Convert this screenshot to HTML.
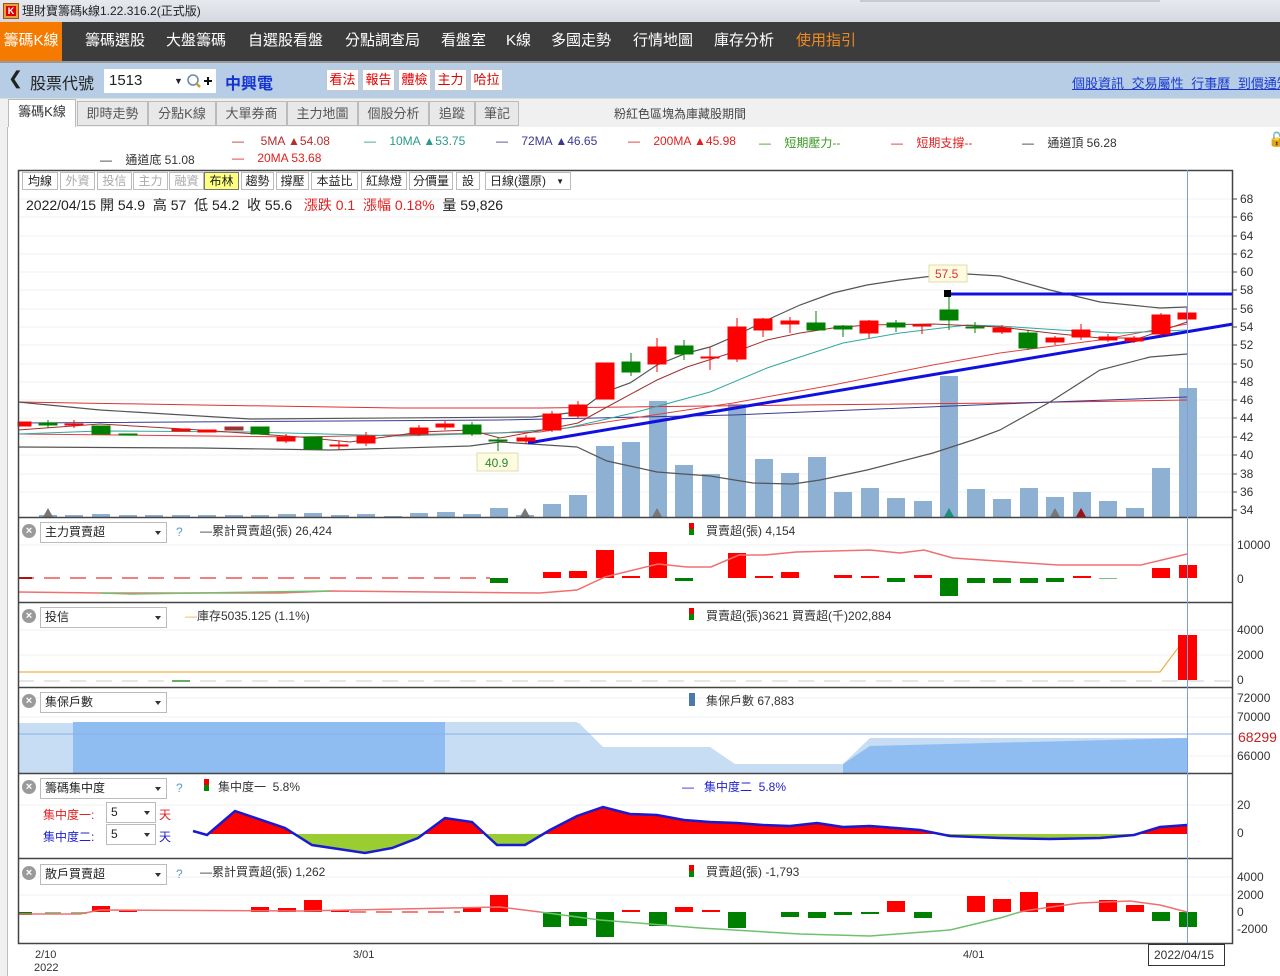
<!DOCTYPE html>
<html><head><meta charset="utf-8">
<style>
*{margin:0;padding:0;box-sizing:border-box}
body{width:1280px;height:976px;overflow:hidden;background:#fff;font-family:"Liberation Sans","Noto Sans CJK TC",sans-serif;position:relative}
.a{position:absolute;white-space:nowrap}
#title{left:0;top:0;width:1280px;height:22px;background:linear-gradient(#e6e9ee,#d6dae0);font-size:12px;color:#222;line-height:22px;padding-left:22px}
#menu{left:0;top:22px;width:1280px;height:39px;background:#3c3c3c}
.mi{position:absolute;top:0;height:39px;line-height:38px;color:#fff;font-size:15px}
#bar{left:0;top:61px;width:1280px;height:37px;background:#b7cde6;border-top:2px solid #999}
#tabs{left:0;top:98px;width:1280px;height:29px;background:#f0f0f0;border-top:1px solid #ddd}
.tab{position:absolute;top:3px;height:25px;line-height:24px;font-size:13px;color:#555;background:#e8e8e8;border:1px solid #bbb;text-align:center}
.btn{position:absolute;top:69px;height:22px;line-height:20px;font-size:13px;color:#e00000;background:#fff;border:1px solid #c8c8c8;text-align:center}
.tb{position:absolute;top:172px;height:18px;line-height:17px;font-size:12px;color:#222;background:#fff;border:1px solid #bbb;text-align:center}
.dd{position:absolute;height:21px;background:#fff;border:1px solid #bbb;font-size:12px;line-height:19px;padding-left:4px;color:#222}
.dd:after{content:"";position:absolute;right:5px;top:8px;border:3px solid transparent;border-top:4px solid #333}
.x{position:absolute;width:14px;height:14px;border-radius:7px;background:#9a9a9a;color:#fff;font-size:11px;line-height:14px;text-align:center;font-weight:bold}
.lg{font-size:12px;color:#333}
.ax{font-size:12px;color:#333}
</style></head><body>
<div class="a" id="title">理財寶籌碼k線1.22.316.2(正式版)</div>
<div class="a" style="left:3px;top:3px;width:16px;height:16px;background:#e8a040;border:1px solid #a05010"><div style="margin:2px;width:10px;height:10px;background:#d00;color:#fff;font-size:9px;line-height:10px;text-align:center;font-weight:bold">K</div></div>
<div class="a" style="left:860px;top:0;width:300px;height:2px;background:#c8ccd2"></div>
<div class="a" id="menu">
<div class="mi" style="left:0;width:62px;background:#f47b00;text-align:center">籌碼K線</div>
<div class="mi" style="left:85px">籌碼選股</div>
<div class="mi" style="left:166px">大盤籌碼</div>
<div class="mi" style="left:248px">自選股看盤</div>
<div class="mi" style="left:345px">分點調查局</div>
<div class="mi" style="left:441px">看盤室</div>
<div class="mi" style="left:506px">K線</div>
<div class="mi" style="left:551px">多國走勢</div>
<div class="mi" style="left:633px">行情地圖</div>
<div class="mi" style="left:714px">庫存分析</div>
<div class="mi" style="left:796px;color:#f08a20">使用指引</div>
</div>
<div class="a" id="bar"></div>
<div class="a" style="left:8px;top:68px;font-size:18px;color:#222">❮</div>
<div class="a" style="left:30px;top:70px;font-size:16px;color:#222">股票代號</div>
<div class="a" style="left:104px;top:69px;width:112px;height:24px;background:#fff;font-size:15px;line-height:24px;padding-left:5px;color:#222">1513<span style="position:absolute;left:70px;font-size:9px">▼</span></div>
<svg class="a" style="left:186px;top:73px" width="30" height="16"><circle cx="7" cy="7" r="5" fill="none" stroke="#6a8ab0" stroke-width="1.6"/><line x1="10.5" y1="10.5" x2="14" y2="14" stroke="#c8a020" stroke-width="2.5"/><path d="M18 8h8M22 4v8" stroke="#111" stroke-width="2"/></svg>
<div class="a" style="left:225px;top:70px;font-size:16px;color:#1533d0;font-weight:bold">中興電</div>
<div class="btn" style="left:326px;width:33px">看法</div>
<div class="btn" style="left:362px;width:33px">報告</div>
<div class="btn" style="left:398px;width:33px">體檢</div>
<div class="btn" style="left:434px;width:33px">主力</div>
<div class="btn" style="left:470px;width:33px">哈拉</div>
<div class="a" style="left:1072px;top:73px;font-size:13px;color:#1a3ad0;text-decoration:underline;word-spacing:4px">個股資訊 交易屬性 行事曆 到價通知</div>
<div class="a" id="tabs"></div>
<div class="tab" style="left:8px;top:99px;width:68px;height:28px;background:#fff;border-bottom:none;color:#333">籌碼K線</div>
<div class="tab" style="left:77px;top:101px;width:71px">即時走勢</div>
<div class="tab" style="left:148px;top:101px;width:68px">分點K線</div>
<div class="tab" style="left:216px;top:101px;width:71px">大單券商</div>
<div class="tab" style="left:287px;top:101px;width:71px">主力地圖</div>
<div class="tab" style="left:358px;top:101px;width:71px">個股分析</div>
<div class="tab" style="left:429px;top:101px;width:46px">追蹤</div>
<div class="tab" style="left:475px;top:101px;width:44px">筆記</div>
<div class="a" style="left:614px;top:105px;font-size:12px;color:#444">粉紅色區塊為庫藏股期間</div>
<div class="a" style="left:0;top:127px;width:1280px;height:849px;background:#fff"></div>
<div class="a" style="left:7px;top:127px;width:1px;height:849px;background:#bbb"></div>
<div class="a" style="left:0;top:127px;width:7px;height:849px;background:#f0f0f0"></div>
<div class="a lg" style="left:232px;top:134px;color:#b03030">—&nbsp;&nbsp;&nbsp;&nbsp;&nbsp;5MA ▲54.08</div>
<div class="a lg" style="left:364px;top:134px;color:#2a9a8a">—&nbsp;&nbsp;&nbsp;&nbsp;10MA ▲53.75</div>
<div class="a lg" style="left:496px;top:134px;color:#3a3a90">—&nbsp;&nbsp;&nbsp;&nbsp;72MA ▲46.65</div>
<div class="a lg" style="left:628px;top:134px;color:#e02020">—&nbsp;&nbsp;&nbsp;&nbsp;200MA ▲45.98</div>
<div class="a lg" style="left:759px;top:134px;color:#3a9a20">—&nbsp;&nbsp;&nbsp;&nbsp;短期壓力--</div>
<div class="a lg" style="left:891px;top:134px;color:#e02020">—&nbsp;&nbsp;&nbsp;&nbsp;短期支撐--</div>
<div class="a lg" style="left:1022px;top:134px;color:#333">—&nbsp;&nbsp;&nbsp;&nbsp;通道頂 56.28</div>
<div class="a lg" style="left:100px;top:151px;color:#333">—&nbsp;&nbsp;&nbsp;&nbsp;通道底 51.08</div>
<div class="a lg" style="left:232px;top:151px;color:#e02020">—&nbsp;&nbsp;&nbsp;&nbsp;20MA 53.68</div>
<div class="a" style="left:1268px;top:131px;font-size:14px;color:#222">🔓</div>

<svg class="a" style="left:0;top:0" width="1280" height="976">
<g stroke="#f0f0f0" stroke-width="1">
<path d="M18 199H1233M18 217H1233M18 236H1233M18 254H1233M18 272H1233M18 290H1233M18 309H1233M18 327H1233M18 345H1233M18 364H1233M18 382H1233M18 400H1233M18 418H1233M18 437H1233M18 455H1233M18 474H1233M18 492H1233"/>
<path d="M18 545H1233M18 630H1233M18 655H1233M18 698H1233M18 717H1233M18 756H1233M18 805H1233M18 877H1233M18 895H1233"/>
</g>
<g fill="#8eb0d3">
<rect x="39" y="515" width="18" height="2"/><rect x="65" y="515" width="18" height="2"/><rect x="92" y="514" width="18" height="3"/><rect x="119" y="515" width="18" height="2"/><rect x="145" y="515" width="18" height="2"/><rect x="172" y="515" width="18" height="2"/><rect x="198" y="515" width="18" height="2"/><rect x="225" y="515" width="18" height="2"/><rect x="251" y="515" width="18" height="2"/><rect x="278" y="514" width="18" height="3"/><rect x="304" y="513" width="18" height="4"/><rect x="331" y="515" width="18" height="2"/><rect x="357" y="514" width="18" height="3"/><rect x="384" y="516" width="18" height="1"/><rect x="410" y="513" width="18" height="4"/><rect x="437" y="512" width="18" height="5"/><rect x="463" y="514" width="18" height="3"/><rect x="490" y="508" width="18" height="9"/><rect x="516" y="515" width="18" height="2"/><rect x="543" y="504" width="18" height="13"/><rect x="569" y="495" width="18" height="22"/><rect x="596" y="446" width="18" height="71"/><rect x="622" y="442" width="18" height="75"/><rect x="649" y="401" width="18" height="116"/><rect x="675" y="465" width="18" height="52"/><rect x="702" y="474" width="18" height="43"/><rect x="728" y="404" width="18" height="113"/><rect x="755" y="459" width="18" height="58"/><rect x="781" y="473" width="18" height="44"/><rect x="808" y="457" width="18" height="60"/><rect x="834" y="492" width="18" height="25"/><rect x="861" y="488" width="18" height="29"/><rect x="887" y="498" width="18" height="19"/><rect x="914" y="501" width="18" height="16"/><rect x="940" y="376" width="18" height="141"/><rect x="967" y="489" width="18" height="28"/><rect x="993" y="499" width="18" height="18"/><rect x="1020" y="488" width="18" height="29"/><rect x="1046" y="497" width="18" height="20"/><rect x="1073" y="492" width="18" height="25"/><rect x="1099" y="501" width="18" height="16"/><rect x="1126" y="508" width="18" height="9"/><rect x="1152" y="468" width="18" height="49"/><rect x="1179" y="388" width="18" height="129"/>
</g>
<g><path d="M43 517l5-9 5 9z" fill="#777"/><path d="M520 517l5-9 5 9z" fill="#777"/><path d="M652 517l5-9 5 9z" fill="#777"/><path d="M944 517l5-9 5 9z" fill="#1a9080"/><path d="M1050 517l5-9 5 9z" fill="#777"/><path d="M1076 517l5-9 5 9z" fill="#a01010"/></g>
<g fill="none">
<polyline stroke="#e03030" stroke-width="1" points="18,402 200,405 400,408 540,408 800,405 1000,403 1187,400"/>
<polyline stroke="#3a3a90" stroke-width="1" points="18,423 500,420 733,415 1000,404 1187,397"/>
<polyline stroke="#555" stroke-width="1.2" points="18,402 100,410 250,419 533,417 578,412 605,392 630,383 657,365 687,353 710,347 733,337 767,320 800,305 833,293 867,285 900,280 933,276 967,274 1000,276 1050,290 1100,302 1160,308 1187,307"/>
<polyline stroke="#555" stroke-width="1.2" points="18,447 200,448 330,450 470,446 500,442 577,447 607,461 657,472 710,476 753,483 793,484 820,480 867,470 933,453 973,440 1000,430 1050,402 1100,370 1150,357 1187,354"/>
<polyline stroke="#e04040" stroke-width="1" points="18,434 300,437 540,432 633,418 733,403 833,385 933,365 1000,353 1100,340 1187,324"/>
<polyline stroke="#30a8a0" stroke-width="1" points="18,434 100,431 250,432 400,436 500,433 567,428 633,413 710,392 767,368 800,357 843,343 900,333 967,325 1000,326 1060,330 1120,333 1187,330"/>
<polyline stroke="#a03030" stroke-width="1" points="18,430 100,424 200,430 300,437 350,442 420,432 470,430 500,438 543,430 578,423 607,407 657,380 687,367 740,350 767,340 800,333 833,328 867,325 933,324 1000,327 1050,333 1100,338 1140,338 1187,322"/>
<line x1="528" y1="443" x2="1233" y2="324" stroke="#1010e0" stroke-width="3"/>
<line x1="948" y1="294" x2="1233" y2="294" stroke="#1010e0" stroke-width="3"/>
</g>
<g stroke-width="1">
<g stroke="#ff0000" fill="#ff0000">
<rect x="18" y="422" width="13" height="4"/>
<line x1="74" y1="420" x2="74" y2="428"/><rect x="65" y="424" width="18" height="1"/>
<rect x="172" y="429" width="18" height="2"/><rect x="198" y="430" width="18" height="2"/>
<rect x="277" y="437" width="18" height="4"/><line x1="286" y1="434" x2="286" y2="443"/>
<line x1="339" y1="441" x2="339" y2="450"/><rect x="330" y="445" width="18" height="1"/>
<rect x="357" y="436" width="18" height="7"/><line x1="366" y1="432" x2="366" y2="446"/>
<rect x="410" y="428" width="18" height="6"/><line x1="419" y1="425" x2="419" y2="436"/>
<rect x="436" y="424" width="18" height="3"/><line x1="445" y1="421" x2="445" y2="430"/>
<rect x="517" y="438" width="18" height="3"/><line x1="526" y1="435" x2="526" y2="444"/>
<rect x="543" y="414" width="18" height="16"/><line x1="552" y1="411" x2="552" y2="432"/>
<rect x="569" y="405" width="18" height="11"/><line x1="578" y1="401" x2="578" y2="418"/>
<rect x="596" y="363" width="18" height="36"/>
<rect x="648" y="347" width="18" height="17"/><line x1="657" y1="338" x2="657" y2="372"/>
<line x1="710" y1="347" x2="710" y2="370"/><rect x="701" y="357" width="18" height="1"/>
<rect x="728" y="327" width="18" height="32"/><line x1="737" y1="318" x2="737" y2="362"/>
<rect x="754" y="319" width="18" height="11"/><line x1="763" y1="318" x2="763" y2="337"/>
<rect x="781" y="321" width="18" height="3"/><line x1="790" y1="317" x2="790" y2="333"/>
<rect x="860" y="321" width="18" height="12"/><line x1="869" y1="320" x2="869" y2="338"/>
<rect x="913" y="325" width="18" height="1"/><line x1="922" y1="324" x2="922" y2="334"/>
<rect x="993" y="328" width="18" height="4"/><line x1="1002" y1="325" x2="1002" y2="334"/>
<rect x="1046" y="338" width="18" height="4"/><line x1="1055" y1="336" x2="1055" y2="345"/>
<rect x="1072" y="330" width="18" height="7"/><line x1="1081" y1="324" x2="1081" y2="340"/>
<rect x="1099" y="337" width="18" height="3"/><line x1="1108" y1="334" x2="1108" y2="342"/>
<rect x="1125" y="338" width="18" height="3"/><line x1="1134" y1="336" x2="1134" y2="343"/>
<rect x="1152" y="315" width="18" height="19"/><line x1="1161" y1="313" x2="1161" y2="336"/>
<rect x="1178" y="313" width="18" height="6"/><line x1="1187" y1="308" x2="1187" y2="323"/>
</g>
<g stroke="#a03030" fill="#a03030"><rect x="225" y="427" width="18" height="3"/></g>
<g stroke="#008000" fill="#008000">
<rect x="39" y="423" width="18" height="2"/><line x1="48" y1="420" x2="48" y2="428"/>
<rect x="92" y="426" width="18" height="8"/>
<rect x="119" y="434" width="18" height="1"/>
<rect x="251" y="427" width="18" height="7"/>
<rect x="304" y="437" width="18" height="12"/>
<rect x="463" y="425" width="18" height="9"/><line x1="472" y1="422" x2="472" y2="436"/>
<line x1="498" y1="437" x2="498" y2="451"/><rect x="489" y="440" width="18" height="1"/>
<rect x="622" y="362" width="18" height="10"/><line x1="631" y1="353" x2="631" y2="376"/>
<rect x="675" y="346" width="18" height="8"/><line x1="684" y1="340" x2="684" y2="360"/>
<rect x="807" y="323" width="18" height="7"/><line x1="816" y1="311" x2="816" y2="330"/>
<rect x="834" y="326" width="18" height="3"/><line x1="843" y1="325" x2="843" y2="337"/>
<rect x="887" y="323" width="18" height="4"/><line x1="896" y1="320" x2="896" y2="332"/>
<rect x="940" y="310" width="18" height="10"/><line x1="949" y1="293" x2="949" y2="330"/>
<line x1="975" y1="322" x2="975" y2="333"/><rect x="966" y="327" width="18" height="1"/>
<rect x="1019" y="333" width="18" height="15"/><line x1="1028" y1="330" x2="1028" y2="350"/>
</g>
</g>
<rect x="944" y="290" width="7" height="7" fill="#000"/>
<rect x="929" y="265" width="38" height="17" fill="#fdfbe0" stroke="#e0dcb0"/>
<text x="935" y="278" font-size="12" fill="#e03030" font-family="Liberation Sans">57.5</text>
<rect x="477" y="453" width="41" height="18" fill="#fdfbe0" stroke="#e0dcb0"/>
<text x="485" y="467" font-size="12" fill="#2a8a2a" font-family="Liberation Sans">40.9</text>

<g stroke-dasharray="16 10" stroke-width="2" fill="none">
<line x1="18" y1="578" x2="490" y2="578" stroke="#f08080"/>
</g>
<line x1="18" y1="578" x2="32" y2="578" stroke="#b01010" stroke-width="2"/>
<g fill="#ff0000">
<rect x="543" y="572" width="18" height="6"/><rect x="569" y="571" width="18" height="7"/><rect x="596" y="550" width="18" height="28"/><rect x="622" y="576" width="18" height="2"/><rect x="649" y="552" width="18" height="26"/><rect x="728" y="553" width="18" height="25"/><rect x="755" y="576" width="18" height="2"/><rect x="781" y="572" width="18" height="6"/><rect x="834" y="575" width="18" height="3"/><rect x="861" y="576" width="18" height="2"/><rect x="914" y="575" width="18" height="3"/><rect x="1073" y="576" width="18" height="2"/><rect x="1152" y="568" width="18" height="10"/><rect x="1179" y="565" width="18" height="13"/>
</g>
<g fill="#008000">
<rect x="490" y="578" width="18" height="5"/><rect x="675" y="578" width="18" height="3"/><rect x="887" y="578" width="18" height="4"/><rect x="940" y="578" width="18" height="18"/><rect x="967" y="578" width="18" height="5"/><rect x="993" y="578" width="18" height="5"/><rect x="1020" y="578" width="18" height="5"/><rect x="1046" y="578" width="18" height="4"/>
</g>
<rect x="1099" y="578" width="18" height="1" fill="#80c080"/>
<polyline fill="none" stroke="#f07070" stroke-width="1.5" points="18,592 100,593 280,593 330,591 540,593 577,590 605,577 658,564 687,567 711,567 739,555 765,555 796,552 870,550 900,553 924,550 953,558 997,561 1058,565 1141,565 1187,554"/>
<polyline fill="none" stroke="#70c070" stroke-width="1.5" points="100,593 130,594 330,591"/>
<line x1="18" y1="681" x2="1233" y2="681" stroke="#e6e6e6" stroke-width="2" stroke-dasharray="16 10"/>
<line x1="172" y1="681" x2="190" y2="681" stroke="#60b060" stroke-width="2"/>
<polyline fill="none" stroke="#f0b040" stroke-width="1.2" points="18,672 1160,672 1187,636"/>
<rect x="1178" y="635" width="19" height="45" fill="#ff0000"/>
<rect x="18" y="723" width="1169" height="50" fill="#c6ddf3"/>
<rect x="73" y="722" width="372" height="51" fill="#8fbdf2"/>
<polygon points="445,722 577,722 577,773 445,773" fill="#c6ddf3"/>
<polygon points="577,721 603,747 710,747 735,764 843,764 870,738 1188,738 1188,721" fill="#fff"/>
<polygon points="843,773 843,764 870,746 1187,738 1187,773" fill="#8fbdf2"/>
<line x1="18" y1="734" x2="1233" y2="734" stroke="#8ab0e8" stroke-width="1"/>
<defs>
<clipPath id="up"><rect x="18" y="774" width="1215" height="60"/></clipPath>
<clipPath id="dn"><rect x="18" y="834" width="1215" height="24"/></clipPath>
</defs>
<polygon clip-path="url(#up)" fill="#ff0000" points="207,834 207,835 235,811 285,828 312,845 365,853 392,848 418,838 445,818 472,822 497,845 525,845 550,830 577,816 603,807 630,814 657,815 684,820 710,822 737,823 763,825 790,826 817,823 843,827 870,826 896,828 920,830 950,836 1000,838 1050,839 1100,838 1134,835 1160,827 1187,825 1187,834"/>
<polygon clip-path="url(#dn)" fill="#9acd32" points="193,834 193,831 207,835 235,811 285,828 312,845 365,853 392,848 418,838 445,818 472,822 497,845 525,845 550,830 577,816 603,807 630,814 657,815 684,820 710,822 737,823 763,825 790,826 817,823 843,827 870,826 896,828 920,830 950,836 1000,838 1050,839 1100,838 1134,835 1160,827 1187,825 1187,834"/>
<polyline fill="none" stroke="#1a1ad0" stroke-width="2.5" points="193,831 207,835 235,811 285,828 312,845 365,853 392,848 418,838 445,818 472,822 497,845 525,845 550,830 577,816 603,807 630,814 657,815 684,820 710,822 737,823 763,825 790,826 817,823 843,827 870,826 896,828 920,830 950,836 1000,838 1050,839 1100,838 1134,835 1160,827 1187,825"/>
<g fill="#ff0000">
<rect x="92" y="906" width="18" height="6"/><rect x="119" y="910" width="18" height="2"/><rect x="251" y="907" width="18" height="5"/><rect x="278" y="908" width="18" height="4"/><rect x="304" y="900" width="18" height="12"/><rect x="331" y="910" width="18" height="2"/><rect x="463" y="908" width="18" height="4"/><rect x="490" y="895" width="18" height="17"/><rect x="622" y="910" width="18" height="2"/><rect x="675" y="907" width="18" height="5"/><rect x="702" y="910" width="18" height="2"/><rect x="887" y="901" width="18" height="11"/><rect x="967" y="896" width="18" height="16"/><rect x="993" y="899" width="18" height="13"/><rect x="1020" y="892" width="18" height="20"/><rect x="1046" y="903" width="18" height="9"/><rect x="1099" y="900" width="18" height="12"/><rect x="1126" y="905" width="18" height="7"/>
</g>
<g fill="#008000">
<rect x="18" y="912" width="14" height="3"/><rect x="543" y="912" width="18" height="15"/><rect x="569" y="912" width="18" height="14"/><rect x="596" y="912" width="18" height="25"/><rect x="649" y="912" width="18" height="14"/><rect x="728" y="912" width="18" height="16"/><rect x="781" y="912" width="18" height="5"/><rect x="808" y="912" width="18" height="6"/><rect x="834" y="912" width="18" height="3"/><rect x="861" y="912" width="18" height="2"/><rect x="914" y="912" width="18" height="6"/><rect x="1152" y="912" width="18" height="9"/><rect x="1179" y="912" width="18" height="15"/>
</g>
<g stroke-dasharray="16 10" stroke-width="2"><line x1="45" y1="913" x2="90" y2="913" stroke="#80c080"/><line x1="350" y1="912" x2="460" y2="912" stroke="#f08080"/></g>
<polyline fill="none" stroke="#f07070" stroke-width="1.5" points="18,914 80,914 100,910 300,911 400,909 500,907 540,912"/>
<polyline fill="none" stroke="#70c070" stroke-width="1.5" points="540,912 600,920 700,928 800,934 870,936 950,930 1000,918 1020,912"/>
<polyline fill="none" stroke="#f07070" stroke-width="1.5" points="1020,912 1030,910 1080,903 1130,901 1160,905 1187,912"/>
<g stroke="#444" stroke-width="1.5" fill="none">
<rect x="18.5" y="170.5" width="1214" height="773"/>
<path d="M18 517.5H1233M18 602.5H1233M18 687.5H1233M18 773.5H1233M18 858.5H1233"/>
</g>
<line x1="1187.5" y1="170" x2="1187.5" y2="943" stroke="#7aa0e0" stroke-width="1"/>
<g stroke="#444"><path d="M1233 199h4M1233 217h4M1233 236h4M1233 254h4M1233 272h4M1233 290h4M1233 309h4M1233 327h4M1233 345h4M1233 364h4M1233 382h4M1233 400h4M1233 418h4M1233 437h4M1233 455h4M1233 474h4M1233 492h4M1233 510h4"/></g>
<g font-family="Liberation Sans" font-size="12" fill="#333">
<text x="1240" y="203">68</text><text x="1240" y="221">66</text><text x="1240" y="240">64</text><text x="1240" y="258">62</text><text x="1240" y="276">60</text><text x="1240" y="294">58</text><text x="1240" y="313">56</text><text x="1240" y="331">54</text><text x="1240" y="349">52</text><text x="1240" y="368">50</text><text x="1240" y="386">48</text><text x="1240" y="404">46</text><text x="1240" y="422">44</text><text x="1240" y="441">42</text><text x="1240" y="459">40</text><text x="1240" y="478">38</text><text x="1240" y="496">36</text><text x="1240" y="514">34</text>
<text x="1237" y="549">10000</text><text x="1237" y="583">0</text>
<text x="1237" y="634">4000</text><text x="1237" y="659">2000</text><text x="1237" y="684">0</text>
<text x="1237" y="702">72000</text><text x="1237" y="721">70000</text><text x="1237" y="760">66000</text>
<text x="1237" y="809">20</text><text x="1237" y="837">0</text>
<text x="1237" y="881">4000</text><text x="1237" y="899">2000</text><text x="1237" y="916">0</text><text x="1237" y="933">-2000</text>
<text x="35" y="958" font-size="11">2/10</text><text x="34" y="971" font-size="11">2022</text>
<text x="353" y="958" font-size="11">3/01</text><text x="963" y="958" font-size="11">4/01</text>
</g>
<text x="1238" y="742" font-family="Liberation Sans" font-size="14" fill="#c02020">68299</text>
<rect x="1148.5" y="944.5" width="76" height="21" fill="#fff" stroke="#333"/>
<text x="1154" y="959" font-family="Liberation Sans" font-size="12" fill="#333">2022/04/15</text>
</svg>

<div class="tb" style="left:22px;width:36px">均線</div>
<div class="tb" style="left:60px;width:35px;color:#aaa">外資</div>
<div class="tb" style="left:97px;width:35px;color:#aaa">投信</div>
<div class="tb" style="left:133px;width:35px;color:#aaa">主力</div>
<div class="tb" style="left:169px;width:35px;color:#aaa">融資</div>
<div class="tb" style="left:204px;width:35px;background:#ffff80;border-color:#777">布林</div>
<div class="tb" style="left:241px;width:33px">趨勢</div>
<div class="tb" style="left:276px;width:33px">撐壓</div>
<div class="tb" style="left:311px;width:47px">本益比</div>
<div class="tb" style="left:361px;width:46px">紅綠燈</div>
<div class="tb" style="left:409px;width:44px">分價量</div>
<div class="tb" style="left:456px;width:24px">設</div>
<div class="tb" style="left:485px;width:86px;text-align:left;padding-left:4px">日線(還原)<span style="position:absolute;right:6px;font-size:8px">▼</span></div>
<div class="a" style="left:26px;top:195px;font-size:14px;color:#222">2022/04/15 開 54.9&nbsp; 高 57&nbsp; 低 54.2&nbsp; 收 55.6&nbsp;&nbsp; <span style="color:#e02020">漲跌 0.1&nbsp; 漲幅 0.18%</span>&nbsp; 量 59,826</div>

<div class="x" style="left:22px;top:524px">×</div><div class="dd" style="left:40px;top:522px;width:127px">主力買賣超</div>
<div class="a" style="left:176px;top:525px;font-size:12px;color:#5a9ad0">?</div>
<div class="a lg" style="left:200px;top:522px">—累計買賣超(張) 26,424</div>
<div class="a" style="left:689px;top:523px;width:5px;height:12px;background:linear-gradient(#e00 50%,#080 50%)"></div>
<div class="a lg" style="left:706px;top:522px">買賣超(張) 4,154</div>

<div class="x" style="left:22px;top:609px">×</div><div class="dd" style="left:40px;top:607px;width:127px">投信</div>
<div class="a lg" style="left:185px;top:607px"><span style="color:#f0b040">—</span>庫存5035.125 (1.1%)</div>
<div class="a" style="left:689px;top:608px;width:5px;height:12px;background:linear-gradient(#e00 50%,#080 50%)"></div>
<div class="a lg" style="left:706px;top:607px">買賣超(張)3621 買賣超(千)202,884</div>

<div class="x" style="left:22px;top:694px">×</div><div class="dd" style="left:40px;top:692px;width:127px">集保戶數</div>
<div class="a" style="left:689px;top:693px;width:6px;height:13px;background:#4a7aaa"></div>
<div class="a lg" style="left:706px;top:692px">集保戶數 67,883</div>

<div class="x" style="left:22px;top:780px">×</div><div class="dd" style="left:40px;top:778px;width:127px">籌碼集中度</div>
<div class="a" style="left:176px;top:781px;font-size:12px;color:#5a9ad0">?</div>
<div class="a" style="left:204px;top:779px;width:5px;height:12px;background:linear-gradient(#e00 50%,#080 50%)"></div>
<div class="a lg" style="left:218px;top:778px">集中度一&nbsp; 5.8%</div>
<div class="a lg" style="left:682px;top:778px;color:#2020d0">—&nbsp;&nbsp; 集中度二&nbsp; 5.8%</div>
<div class="a" style="left:43px;top:806px;font-size:12px;color:#e02020">集中度一:</div>
<div class="dd" style="left:106px;top:802px;width:50px">5</div>
<div class="a" style="left:159px;top:806px;font-size:12px;color:#e02020">天</div>
<div class="a" style="left:43px;top:828px;font-size:12px;color:#2020d0">集中度二:</div>
<div class="dd" style="left:106px;top:824px;width:50px">5</div>
<div class="a" style="left:159px;top:828px;font-size:12px;color:#2020d0">天</div>

<div class="x" style="left:22px;top:866px">×</div><div class="dd" style="left:40px;top:864px;width:127px">散戶買賣超</div>
<div class="a" style="left:176px;top:867px;font-size:12px;color:#5a9ad0">?</div>
<div class="a lg" style="left:200px;top:863px">—累計買賣超(張) 1,262</div>
<div class="a" style="left:689px;top:865px;width:5px;height:12px;background:linear-gradient(#e00 50%,#080 50%)"></div>
<div class="a lg" style="left:706px;top:863px">買賣超(張) -1,793</div>
</body></html>
